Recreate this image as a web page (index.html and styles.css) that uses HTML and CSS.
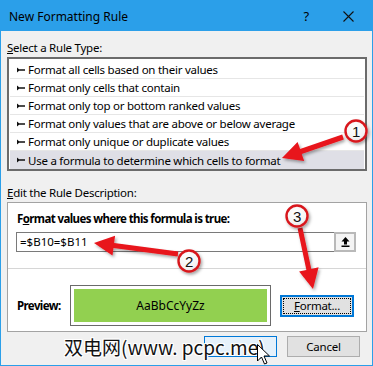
FILE: index.html
```html
<!DOCTYPE html>
<html>
<head>
<meta charset="utf-8">
<link rel="stylesheet" href="styles.css">
</head>
<body>
<div class="dialog">
  <div class="titlebar">
    <span class="title">New Formatting Rule</span>
    <span class="help">?</span>
    <span class="close"><svg width="11" height="11" viewBox="0 0 11 11"><path d="M0.5 0.5 L10.5 10.5 M10.5 0.5 L0.5 10.5" stroke="#111" stroke-width="1.1" fill="none"/></svg></span>
  </div>
  <div class="content">
    <div class="label"><u>S</u>elect a Rule Type:</div>
    <div class="list">
      <div class="row"><svg class="bullet" width="8" height="6" viewBox="0 0 8 6"><path d="M0 0.5 L3 3 L0 5.5 Z M1.5 2.2 H8 V3.8 H1.5 Z" fill="#111"/></svg>Format all cells based on their values</div>
      <div class="row"><svg class="bullet" width="8" height="6" viewBox="0 0 8 6"><path d="M0 0.5 L3 3 L0 5.5 Z M1.5 2.2 H8 V3.8 H1.5 Z" fill="#111"/></svg>Format only cells that contain</div>
      <div class="row"><svg class="bullet" width="8" height="6" viewBox="0 0 8 6"><path d="M0 0.5 L3 3 L0 5.5 Z M1.5 2.2 H8 V3.8 H1.5 Z" fill="#111"/></svg>Format only top or bottom ranked values</div>
      <div class="row"><svg class="bullet" width="8" height="6" viewBox="0 0 8 6"><path d="M0 0.5 L3 3 L0 5.5 Z M1.5 2.2 H8 V3.8 H1.5 Z" fill="#111"/></svg>Format only values that are above or below average</div>
      <div class="row"><svg class="bullet" width="8" height="6" viewBox="0 0 8 6"><path d="M0 0.5 L3 3 L0 5.5 Z M1.5 2.2 H8 V3.8 H1.5 Z" fill="#111"/></svg>Format only unique or duplicate values</div>
      <div class="row selected"><svg class="bullet" width="8" height="6" viewBox="0 0 8 6"><path d="M0 0.5 L3 3 L0 5.5 Z M1.5 2.2 H8 V3.8 H1.5 Z" fill="#111"/></svg>Use a formula to determine which cells to format</div>
    </div>
    <div class="label label2"><u>E</u>dit the Rule Description:</div>
    <div class="desc">
      <div class="blabel">F<u>o</u>rmat values where this formula is true:</div>
      <div class="formula">
        <span class="ftext">=$B10=$B11</span>
        <span class="refbtn"><svg width="9" height="10" viewBox="0 0 9 10"><path d="M4.5 0 L8.5 4.5 H6 V7.5 H3 V4.5 H0.5 Z" fill="#000"/><rect x="0.5" y="8.5" width="8" height="1.5" fill="#000"/></svg></span>
      </div>
      <div class="sep"></div>
      <div class="prow">
        <span class="plabel">Preview:</span>
        <div class="pbox"><div class="pfill">AaBbCcYyZz</div></div>
        <div class="btn fmt"><span class="focus"><u>F</u>ormat...</span></div>
      </div>
    </div>
    <div class="buttons">
      <div class="btn ok">OK</div>
      <div class="btn">Cancel</div>
    </div>
  </div>

  <svg class="annot" width="373" height="366" viewBox="0 0 373 366">
    <defs>
      <filter id="sh" x="-30%" y="-30%" width="160%" height="160%">
        <feDropShadow dx="1.5" dy="2" stdDeviation="1.5" flood-color="#000" flood-opacity="0.35"/>
      </filter>
      <radialGradient id="cg" cx="0.45" cy="0.35" r="0.7">
        <stop offset="0" stop-color="#ffffff"/>
        <stop offset="0.7" stop-color="#f4f4f4"/>
        <stop offset="1" stop-color="#d8d8d8"/>
      </radialGradient>
    </defs>
    <g fill="#e8141b" filter="url(#sh)">
      <polygon points="342.2,134.6 300.1,149.1 297.6,142.0 282,158 304.2,161.0 301.7,153.9 343.8,139.4"/>
      <polygon points="178.3,251.5 114.1,243.1 115.1,235.7 94,243 112.5,255.5 113.5,248.1 177.7,256.5"/>
      <polygon points="302.4,227.5 311.3,268.9 318.6,267.3 313,289 299.1,271.5 306.4,270.0 297.6,228.5"/>
    </g>
    <g filter="url(#sh)">
      <circle cx="356" cy="131" r="10.5" fill="url(#cg)" stroke="#d8191e" stroke-width="2.4"/>
      <circle cx="189" cy="261" r="10.5" fill="url(#cg)" stroke="#d8191e" stroke-width="2.4"/>
      <circle cx="297" cy="216" r="10.5" fill="url(#cg)" stroke="#d8191e" stroke-width="2.4"/>
    </g>
    <g class="num" text-anchor="middle">
      <text x="356" y="136.5">1</text>
      <text x="189" y="266.5">2</text>
      <text x="297" y="221.5">3</text>
    </g>
  </svg>
  <div class="watermark">双电网(www. pcpc.me)</div>
  <svg class="cursor" width="14" height="22" viewBox="0 0 14 22"><path d="M0.5 0.5 L0.5 17 L4.5 13 L7.5 20 L10 19 L7 12 L12.5 12 Z" fill="#fff" stroke="#000" stroke-width="1"/></svg>
</div>
</body>
</html>
```
FILE: styles.css
```css
* { box-sizing: border-box; }
html, body { margin: 0; padding: 0; }
body {
  font-family: "Noto Sans", "Open Sans", sans-serif;
  font-size: 11.5px;
  letter-spacing: -0.25px;
  color: #000;
  background: #fff;
}
.dialog {
  position: relative;
  width: 373px;
  height: 366px;
  border: 1px solid #2b9fe9;
  background: #f0f0f0;
  overflow: hidden;
}
.titlebar {
  height: 30px;
  background: #2b9fe9;
  display: flex;
  align-items: center;
  padding-left: 8px;
}
.title {
  font-size: 12px;
  letter-spacing: 0;
  color: #000;
  flex: 1;
}
.help {
  font-size: 13px;
  margin-right: 34px;
}
.close {
  display: flex;
  margin-right: 18px;
}
.content {
  padding: 0 5px 0 6px;
}
.label {
  line-height: 14px;
  height: 14px;
  margin-top: 10px;
}
.label2 { margin-top: 15px; }
.list {
  margin-top: 2px;
  border: 2px solid #6b6b6b;
  background: #fff;
  padding: 2px 1px 0;
}
.row {
  height: 18px;
  border-bottom: 1px solid #e6e6e6;
  display: flex;
  align-items: center;
  padding-left: 7px;
  white-space: nowrap;
}
.row.selected {
  background: #dfdfe6;
  border-bottom: none;
}
.bullet { margin-right: 3px; flex: none; }
.desc {
  margin-top: 2px;
  border: 1px solid #a3a3a3;
  background: #fff;
  padding: 9px 0 5px;
}
.blabel, .plabel {
  font-weight: bold;
  line-height: 14px;
  height: 14px;
  letter-spacing: -0.6px;
}
.blabel { padding-left: 9px; }
.formula {
  margin: 6px 10px 16px 8px;
  height: 20px;
  border: 1px solid #7a7a7a;
  display: flex;
  align-items: stretch;
}
.ftext {
  flex: 1;
  padding-left: 3px;
  line-height: 18px;
  letter-spacing: 0;
}
.refbtn {
  width: 22px;
  border: 2px solid #b9b9b9;
  margin: -1px -1px -1px 0;
  background: #f4f4f4;
  display: flex;
  align-items: center;
  justify-content: center;
}
.sep {
  height: 1px;
  background: #d6d6d6;
}
.prow {
  margin-top: 16px;
  display: flex;
  align-items: center;
  padding-left: 9px;
}
.plabel { width: 53px; }
.pbox {
  width: 201px;
  height: 41px;
  border: 1px solid #6a6a6a;
  padding: 3px;
  background: #fff;
}
.pfill {
  height: 100%;
  background: #92d050;
  display: flex;
  align-items: center;
  justify-content: center;
  font-size: 12px;
  letter-spacing: 0;
}
.btn {
  width: 73px;
  height: 21px;
  border: 1px solid #adadad;
  background: #e1e1e1;
  display: flex;
  align-items: center;
  justify-content: center;
}
.fmt {
  margin-left: 9px;
  width: 74px;
  height: 22px;
  border: 2px solid #0078d7;
  padding: 1px;
}
.focus {
  width: 100%;
  height: 100%;
  border: 1px dotted #000;
  display: flex;
  align-items: center;
  justify-content: center;
}
.buttons {
  margin-top: 4px;
  margin-right: 7px;
  display: flex;
  justify-content: flex-end;
  gap: 10px;
}
.ok {
  border-color: #0078d7;
  background: #e5f1fb;
  color: transparent;
}
.annot {
  position: absolute;
  left: -1px;
  top: -1px;
  pointer-events: none;
}
.num text {
  font-family: "Liberation Sans", Arial, sans-serif;
  font-size: 15px;
  fill: #111;
}
.watermark {
  position: absolute;
  left: 63px;
  top: 333px;
  font-family: "Noto Sans CJK SC", "Noto Sans", sans-serif;
  font-size: 19px;
  line-height: 26px;
  letter-spacing: 0;
  color: #111;
  white-space: nowrap;
  text-shadow: 1px 1px 0 #fff, -1px -1px 0 #fff, 1px -1px 0 #fff, -1px 1px 0 #fff, 0 1px 0 #fff, 1px 0 0 #fff, -1px 0 0 #fff, 0 -1px 0 #fff;
}
.cursor {
  position: absolute;
  left: 256px;
  top: 343px;
}
```
